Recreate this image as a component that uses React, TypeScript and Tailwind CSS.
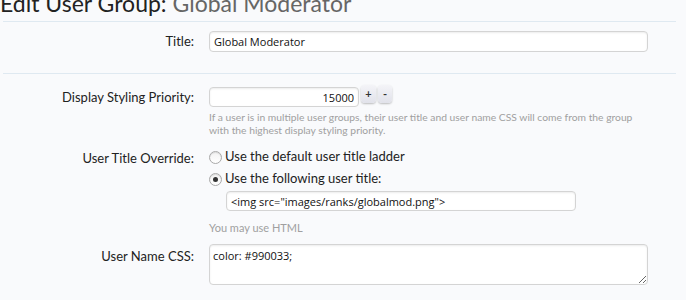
import React from "react";

const labelFont = { fontFamily: '"Lato", "Open Sans", sans-serif' };

function Label({ children }: { children: React.ReactNode }) {
  return (
    <div className="w-[194px] shrink-0 text-right text-[13px] text-[#222]">{children}</div>
  );
}

function Radio({ checked }: { checked?: boolean }) {
  return (
    <span className="flex h-[13px] w-[13px] shrink-0 items-center justify-center rounded-full border border-[#a9a9a9] bg-gradient-to-b from-[#f2f2f2] to-[#ffffff] shadow-[inset_0_1px_1px_rgba(0,0,0,0.1)]">
      {checked ? <span className="h-[5px] w-[5px] rounded-full bg-[#333]" /> : null}
    </span>
  );
}

export default function App() {
  return (
    <div
      className="h-[300px] w-[686px] overflow-hidden bg-[#f9fafc] text-[#222]"
      style={labelFont}
    >
      <h1 className="-mt-[10px] pl-0 text-[23px] leading-[26px] text-[#222]" style={{ fontFamily: '"Lato", sans-serif' }}>
        Edit User Group: <span className="text-[#666]">Global Moderator</span>
      </h1>
      <div className="ml-[3px] mr-[10px] mt-[5px] h-px bg-[#dfe9f1]" />

      <div className="mt-[9px] flex items-center gap-[15px]">
        <Label>Title:</Label>
        <input
          readOnly
          value="Global Moderator"
          className="h-[21px] w-[439px] rounded-[4px] border border-[#d4d4d4] bg-white px-[4px] text-[11px] text-[#111] shadow-[inset_0_1px_2px_rgba(0,0,0,0.08)] outline-none"
          style={{ fontFamily: '"Open Sans", sans-serif' }}
        />
      </div>

      <div className="ml-[3px] mr-[10px] mt-[21px] h-px bg-[#dfe9f1]" />

      <div className="mt-[13px] flex items-start gap-[15px]">
        <div className="pt-[1px]">
          <Label>Display Styling Priority:</Label>
        </div>
        <div className="flex flex-col">
          <div className="flex items-start gap-[2px]">
            <input
              readOnly
              value="15000"
              className="h-[20px] w-[150px] rounded-[4px] border border-[#d4d4d4] bg-white px-[4px] text-right text-[11px] text-[#111] shadow-[inset_0_1px_2px_rgba(0,0,0,0.08)] outline-none"
              style={{ fontFamily: '"Open Sans", sans-serif' }}
            />
            <span className="-mt-[2px] flex h-[18px] w-[15px] items-center justify-center rounded-[4px] bg-gradient-to-b from-[#f4f4f8] to-[#e1e2ea] text-[11px] font-bold text-[#333] shadow-[0_1px_2px_rgba(0,0,0,0.25)]">
              +
            </span>
            <span className="-mt-[2px] flex h-[18px] w-[14px] items-center justify-center rounded-[4px] bg-gradient-to-b from-[#f4f4f8] to-[#e1e2ea] text-[11px] font-bold text-[#333] shadow-[0_1px_2px_rgba(0,0,0,0.25)]">
              -
            </span>
          </div>
          <p className="mt-[4px] w-[445px] text-[10.3px] leading-[13px] text-[#a0a0a0]">
            If a user is in multiple user groups, their user title and user name CSS will come from the group
            with the highest display styling priority.
          </p>
        </div>
      </div>

      <div className="mt-[11px] flex items-start gap-[15px]">
        <div className="pt-[1px]">
          <Label>User Title Override:</Label>
        </div>
        <div className="flex flex-col">
          <div className="flex h-[18px] items-center gap-[3px] text-[13px]">
            <Radio />
            <span>Use the default user title ladder</span>
          </div>
          <div className="mt-[4px] flex h-[18px] items-center gap-[3px] text-[13px]">
            <Radio checked />
            <span>Use the following user title:</span>
          </div>
          <input
            readOnly
            value={'<img src="images/ranks/globalmod.png">'}
            className="ml-[17px] mt-[3px] h-[20px] w-[350px] rounded-[4px] border border-[#d4d4d4] bg-white px-[4px] text-[11px] text-[#111] shadow-[inset_0_1px_2px_rgba(0,0,0,0.08)] outline-none"
            style={{ fontFamily: '"Open Sans", sans-serif' }}
          />
          <p className="mt-[10px] text-[11px] leading-[13px] text-[#a0a0a0]">You may use HTML</p>
        </div>
      </div>

      <div className="mt-[10px] flex items-start gap-[15px]">
        <div className="pt-[3px]">
          <Label>User Name CSS:</Label>
        </div>
        <textarea
          readOnly
          value="color: #990033;"
          className="h-[41px] w-[439px] rounded-[4px] border border-[#d4d4d4] bg-white px-[3px] py-[4px] text-[11px] leading-[14px] text-[#111] shadow-[inset_0_1px_2px_rgba(0,0,0,0.08)] outline-none"
          style={{ fontFamily: '"Open Sans", sans-serif' }}
        />
      </div>
    </div>
  );
}
